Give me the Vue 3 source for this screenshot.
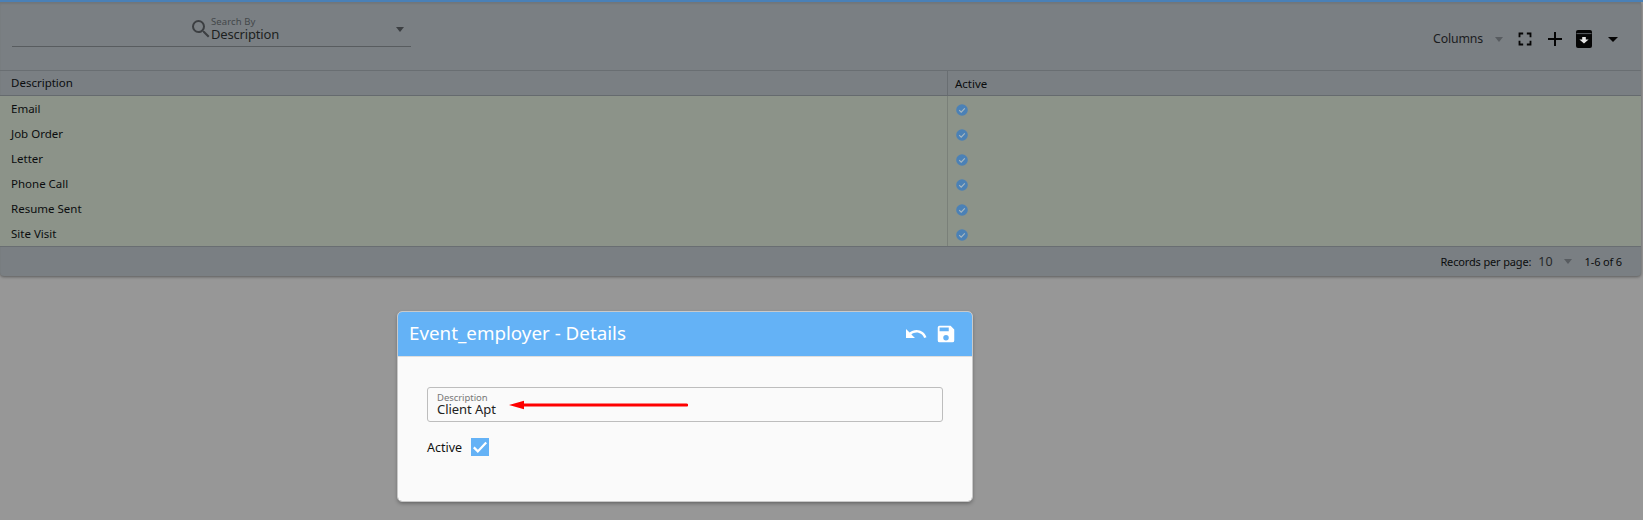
<script setup>
const rows = ['Email', 'Job Order', 'Letter', 'Phone Call', 'Resume Sent', 'Site Visit']
</script>

<template>
  <div class="page">
    <div class="card">
      <div class="toolbar">
        <div class="search">
          <svg class="search-icon" viewBox="0 0 24 24"><path d="M15.5 14h-.79l-.28-.27A6.47 6.47 0 0 0 16 9.5 6.5 6.5 0 1 0 9.5 16c1.61 0 3.09-.59 4.23-1.57l.27.28v.79l5 4.99L20.49 19l-4.99-5zm-6 0C7.01 14 5 11.99 5 9.5S7.01 5 9.5 5 14 7.01 14 9.5 11.99 14 9.5 14z"/></svg>
          <div class="search-text">
            <div class="search-label">Search By</div>
            <div class="search-value">Description</div>
          </div>
          <span class="caret search-caret"></span>
        </div>
        <div class="tools">
          <span class="columns">Columns</span>
          <span class="caret grey columns-caret"></span>
          <svg class="fs" viewBox="0 0 24 24"><path d="M7 14H5v5h5v-2H7v-3zm-2-4h2V7h3V5H5v5zm12 7h-3v2h5v-5h-2v3zM14 5v2h3v3h2V5h-5z"/></svg>
          <svg class="plus" viewBox="0 0 24 24"><path d="M19 13h-6v6h-2v-6H5v-2h6V5h2v6h6v2z"/></svg>
          <svg class="arch" viewBox="0 0 18 18"><path d="M3 0h12a2 2 0 0 1 2 2v14a2 2 0 0 1-2 2H3a2 2 0 0 1-2-2V2a2 2 0 0 1 2-2z" fill="#050505"/><path d="M1.5 3.6h15" stroke="#6f7478" stroke-width=".8"/><path d="M7.2 7h3.6v2.6h2.800L9 13.400 4.400 9.600h2.800z" fill="#e4e4e4"/></svg>
          <span class="caret dark"></span>
        </div>
      </div>
      <div class="grid-row head">
        <div class="c1">Description</div>
        <div class="c2">Active</div>
      </div>
      <div class="body">
        <div v-for="r in rows" :key="r" class="grid-row item">
          <div class="c1">{{ r }}</div>
          <div class="c2">
            <svg class="tick" viewBox="0 0 12 12"><circle cx="6" cy="6" r="5.8" fill="#4b81b6"/><path d="M3.2 6.2l2 2 3.6-3.8" fill="none" stroke="#a9b8c0" stroke-width="1.1"/></svg>
          </div>
        </div>
      </div>
      <div class="foot">
        <span class="tight">Records per page:</span>
        <span class="per">10</span>
        <span class="caret grey foot-caret"></span>
        <span class="tight">1-6 of 6</span>
      </div>
    </div>

    <div class="modal-wrap">
      <div class="modal">
        <div class="modal-head">
          <span class="modal-title">Event_employer - Details</span>
          <svg class="undo" viewBox="0 0 24 24"><path d="M12.5 8c-2.65 0-5.05.99-6.9 2.6L2 7v9h9l-3.62-3.62c1.39-1.16 3.16-1.88 5.12-1.88 3.54 0 6.55 2.31 7.6 5.5l2.37-.78C21.08 11.03 17.15 8 12.5 8z"/></svg>
          <svg class="save" viewBox="0 0 24 24"><path d="M17 3H5a2 2 0 0 0-2 2v14a2 2 0 0 0 2 2h14a2 2 0 0 0 2-2V7l-4-4zm-5 16a3 3 0 1 1 0-6 3 3 0 0 1 0 6zm3-10H5V5h10v4z"/></svg>
        </div>
        <div class="modal-body">
          <div class="field">
            <div class="field-label">Description</div>
            <div class="field-value">Client Apt</div>
            <svg class="arrow" width="179" height="10" viewBox="0 0 179 10"><path d="M0 5l15-4.200v2.600h162.500a1.600 1.600 0 0 1 0 3.200H15v2.600z" fill="#fe0000"/></svg>
          </div>
          <div class="active">
            <span>Active</span>
            <span class="box"><svg viewBox="0 0 18 18"><path d="M2.800 9.400l4 4L15.200 4.400" fill="none" stroke="#fff" stroke-width="2.200"/></svg></span>
          </div>
        </div>
      </div>
    </div>
  </div>
</template>

<style scoped>
.page {
  width: 1643px;
  height: 520px;
  overflow: hidden;
  background: #979797;
  border-top: 2px solid #4a80b6;
  box-sizing: border-box;
  font-family: "Noto Sans", "Open Sans", sans-serif;
  color: #0b0d0e;
}
.card {
  height: 274px;
  margin-right: 2px;
  background: #7a7f83;
  border-radius: 0 0 4px 4px;
  box-shadow: 0 1px 3px rgba(0, 0, 0, .4), inset 0 2px 2px rgba(0, 0, 0, .07);
  clip-path: inset(0 -6px -6px -6px);
  display: flex;
  flex-direction: column;
}
.toolbar {
  height: 68px;
  display: flex;
  justify-content: space-between;
  align-items: flex-start;
  border-bottom: 1px solid #696e72;
}
.search {
  width: 399px;
  height: 45px;
  margin-left: 12px;
  border-bottom: 1px solid #585c5f;
  display: flex;
  align-items: flex-start;
  position: relative;
  padding-left: 177px;
  box-sizing: border-box;
}
.search-icon {
  width: 24px;
  height: 24px;
  fill: #3c3f42;
  margin-top: 15px;
  flex: none;
}
.search-text { margin-left: -2px; margin-top: 15px; }
.search-label { font-size: 9.5px; line-height: 10px; color: #43474a; letter-spacing: .1px; }
.search-value { font-size: 13px; line-height: 14px; color: #1d1f21; letter-spacing: -.17px; }
.caret {
  width: 0;
  height: 0;
  border-left: 4px solid transparent;
  border-right: 4px solid transparent;
  border-top: 5px solid #3c3f42;
  flex: none;
}
.search-caret { position: absolute; right: 7px; top: 25px; }
.tools {
  display: flex;
  align-items: center;
  margin-top: 26px;
  height: 22px;
  padding-right: 23px;
}
.columns { font-size: 12.300px; color: #1a1c1e; letter-spacing: -.15px; margin: 0 0 2px 1px; }
.grey { border-top-color: #585c60; }
.columns-caret { margin-left: 12px; }
.fs { width: 22px; height: 22px; margin-left: 11px; fill: #050505; }
.plus { width: 24px; height: 24px; margin-left: 7px; fill: #050505; }
.arch { width: 18px; height: 18px; margin-left: 8px; }
.dark { border-top-color: #050505; margin-left: 15px; border-left-width: 5px; border-right-width: 5px; }
.grid-row { display: flex; }
.c1 { width: 947px; padding-left: 11px; box-sizing: border-box; flex: none; }
.c2 { padding-left: 8px; border-left: 1px solid #696e72; flex: 1; display: flex; align-items: center; }
.head {
  height: 24px;
  line-height: 23px;
  font-size: 11.500px;
  border-bottom: 1px solid #656a6e;
}
.head .c2 { padding-left: 7px; }
.body { background: #8c9389; height: 150px; }
.item { height: 25px; line-height: 25px; font-size: 11.500px; }
.item .c2 { border-left-color: #7a8079; }
.tick { width: 12px; height: 12px; margin-top: 2px; }
.foot {
  flex: 1;
  border-top: 1px solid #696e72;
  display: flex;
  align-items: center;
  justify-content: flex-end;
  font-size: 11px;
  padding-right: 19px;
}
.tight { letter-spacing: -.15px; }
.per { font-size: 12.500px; margin-left: 7px; color: #26282a; }
.foot-caret { margin: 0 13px 0 11px; }
.modal-wrap { padding: 36px 0 0 398px; }
.modal {
  width: 574px;
  height: 189px;
  background: #fafafa;
  border-radius: 4px;
  overflow: hidden;
  outline: 1px solid #c9c9c9;
  box-shadow: 0 2px 4px rgba(0, 0, 0, .4);
}
.modal-head {
  height: 44px;
  background: #64b2f6;
  border-bottom: 1px solid #dedede;
  display: flex;
  align-items: center;
  padding: 0 15px 0 11px;
  color: #fff;
}
.modal-title { font-size: 18.800px; flex: 1; margin-top: -2px; }
.undo { width: 24px; height: 24px; fill: #fff; margin-right: 7px; }
.save { width: 22px; height: 22px; fill: #fff; }
.modal-body { padding: 30px 29px 0 29px; }
.field {
  height: 33px;
  border: 1px solid #bdbdbd;
  border-radius: 3px;
  padding-left: 9px;
  position: relative;
  color: #222;
}
.field-label { font-size: 9.500px; line-height: 10px; margin-top: 5px; color: #777; letter-spacing: -.05px; }
.field-value { font-size: 13px; line-height: 13px; letter-spacing: -.05px; }
.arrow { position: absolute; left: 81px; top: 12px; }
.active {
  display: flex;
  align-items: center;
  gap: 9px;
  margin-top: 16px;
  font-size: 12.500px;
  color: #111;
}
.box { width: 18px; height: 18px; background: #64b2f6; display: block; }
.box svg { width: 18px; height: 18px; display: block; }
</style>
